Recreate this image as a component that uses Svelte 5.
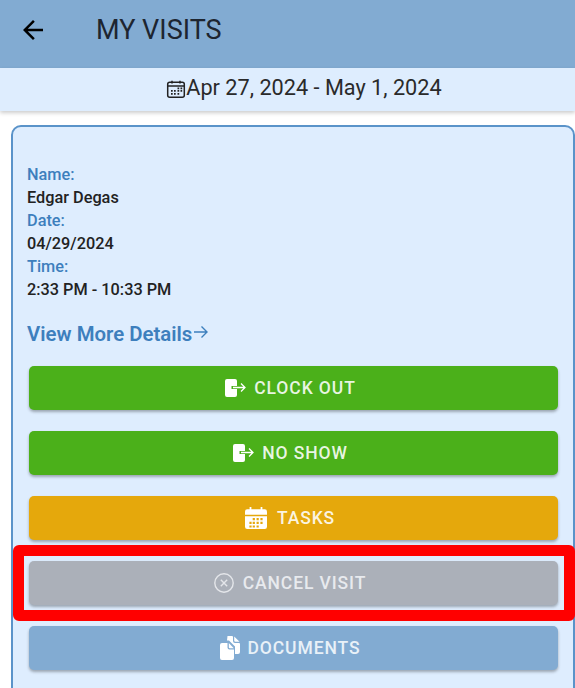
<script>
  const fields = [
    { label: 'Name:', value: 'Edgar Degas' },
    { label: 'Date:', value: '04/29/2024' },
    { label: 'Time:', value: '2:33 PM - 10:33 PM' }
  ];
</script>

<div class="page">
  <header class="topbar">
    <svg class="back" viewBox="0 0 24 24" width="30" height="30"><path d="M20 11H7.830l5.590-5.590L12 4l-8 8 8 8 1.410-1.410L7.830 13H20z" fill="#000"/></svg>
    <h1>MY VISITS</h1>
  </header>

  <div class="range">
    <svg viewBox="0 0 20 20" width="20" height="20" class="cal">
      <rect x="1.700" y="3.200" width="16.600" height="15" rx="2" fill="none" stroke="#222" stroke-width="1.500"/>
      <path d="M2 7h16" stroke="#222" stroke-width="1.500"/>
      <path d="M6 1.800v2.600M14 1.800v2.600" stroke="#222" stroke-width="1.500"/>
      <path d="M11.500 8.500h1.700v1.700h-1.700zM14.500 8.500h1.700v1.700h-1.700zM5 11h1.700v1.700H5zM8 11h1.700v1.700H8zM11.500 11h1.700v1.700h-1.700zM14.500 11h1.700v1.700h-1.700zM5 14h1.700v1.700H5zM8 14h1.700v1.700H8zM11.500 14h1.700v1.700h-1.700z" fill="#222"/>
    </svg><span>Apr 27, 2024 - May 1, 2024</span>
  </div>

  <section class="card">
    <dl>
      {#each fields as f}
        <dt>{f.label}</dt>
        <dd>{f.value}</dd>
      {/each}
    </dl>

    <div class="more">
      <span>View More Details</span>
      <svg viewBox="0 0 18 18" width="18" height="18"><path d="M2 9h13M9.500 3.500 15 9l-5.500 5.500" fill="none" stroke="#3d7fbd" stroke-width="1.400"/></svg>
    </div>

    <div class="actions">
      <button class="green">
        <svg viewBox="0 0 22 18" width="22" height="18"><path d="M3 0h8a2 2 0 0 1 2 2v5H7.500v3H13v6a2 2 0 0 1-2 2H3a2 2 0 0 1-2-2V2a2 2 0 0 1 2-2z" fill="#fff"/><path d="M9 8.500h12M17 4.500l4 4-4 4" fill="none" stroke="#fff" stroke-width="1.300"/></svg>
        CLOCK OUT
      </button>
      <button class="green">
        <svg viewBox="0 0 22 18" width="22" height="18"><path d="M3 0h8a2 2 0 0 1 2 2v5H7.500v3H13v6a2 2 0 0 1-2 2H3a2 2 0 0 1-2-2V2a2 2 0 0 1 2-2z" fill="#fff"/><path d="M9 8.500h12M17 4.500l4 4-4 4" fill="none" stroke="#fff" stroke-width="1.300"/></svg>
        NO SHOW
      </button>
      <button class="amber">
        <svg class="tasks-icon" viewBox="1 1 20 20" width="22" height="22"><path d="M3 3h16a2 2 0 0 1 2 2v3H1V5a2 2 0 0 1 2-2z" fill="#fff"/><path d="M6 1v3M16 1v3" stroke="#fff" stroke-width="1.600"/><path fill-rule="evenodd" d="M1 9.500h20V19a2 2 0 0 1-2 2H3a2 2 0 0 1-2-2zM8 11v2h2v-2zM11.500 11v2h2v-2zM15 11v2h2v-2zM5 14.500v2h2v-2zM8 14.500v2h2v-2zM11.500 14.500v2h2v-2zM15 14.500v2h2v-2zM8 17.800v1.800h2v-1.800zM11.500 17.800v1.800h2v-1.800zM5 17.800v1.800h2v-1.800z" fill="#fff"/></svg>
        TASKS
      </button>
      <button class="grey">
        <svg viewBox="0 0 20 20" width="20" height="20"><circle cx="10" cy="10" r="9.200" fill="none" stroke="#e4e6ea" stroke-width="1.400"/><path d="M6.800 6.800l6.400 6.400M13.200 6.800l-6.400 6.400" stroke="#e4e6ea" stroke-width="1.400"/></svg>
        CANCEL VISIT
      </button>
      <button class="blue">
        <svg viewBox="0 0 20 24" width="20" height="24"><path d="M7.500 0H12l1 .5V5a2 2 0 0 0 2 2h4.500l.5 1v8a2 2 0 0 1-2 2h-3v-7.500L9 4.500H7z" fill="#fff"/><path d="M14.200 .5 19.600 5.800H15.500a1.300 1.300 0 0 1-1.300-1.300z" fill="#fff"/><path d="M2 7h5.500v4.500a2 2 0 0 0 2 2H14V22a2 2 0 0 1-2 2H2a2 2 0 0 1-2-2V9a2 2 0 0 1 2-2z" fill="#fff"/><path d="M8.800 7 13.800 12.200H9.800a1 1 0 0 1-1-1z" fill="#fff"/></svg>
        DOCUMENTS
      </button>
    </div>
  </section>

  <!-- annotation over the screenshot -->
  <div class="highlight"></div>
</div>

<style>
  :global(body) {
    margin: 0;
    background: #fff;
  }

  .page {
    position: relative;
    width: 575px;
    height: 688px;
    overflow: hidden;
    font-family: Roboto, "Liberation Sans", sans-serif;
    background: #fff;
  }

  .topbar {
    height: 68px;
    background: #82abd2;
    display: flex;
    align-items: center;
    padding: 0 0 8px 18px;
    gap: 48px;
    box-sizing: border-box;
  }

  .back {
    width: 30px;
    height: 30px;
  }

  h1 {
    margin: 0;
    font-size: 27px;
    font-weight: 400;
    color: #1d2530;
  }

  .range {
    height: 43px;
    background: #deedfe;
    box-shadow: 0 2px 4px rgba(0, 0, 0, 0.2);
    display: flex;
    align-items: center;
    justify-content: center;
    font-size: 21.700px;
    color: #2a2a2a;
    box-sizing: border-box;
    padding: 0 0 5px 33px;
    position: relative;
  }

  .cal {
    margin-top: 4px;
  }

  .card {
    margin: 14px 0 0 11px;
    width: 564px;
    box-sizing: border-box;
    height: 600px;
    background: #deedfe;
    border: 2px solid #5a93c9;
    border-radius: 10px;
    padding: 36px 15px 0 14px;
  }

  dl {
    margin: 0;
    font-size: 16.300px;
    line-height: 23px;
  }

  dt {
    color: #3d7fbd;
    font-weight: 500;
  }

  dd {
    margin: 0;
    color: #222;
    font-weight: 500;
  }

  .more {
    display: flex;
    align-items: center;
    margin-top: 18px;
    font-size: 20.400px;
    font-weight: 600;
    color: #3d7fbd;
    height: 30px;
  }

  .more svg {
    margin: 0 0 4px 0;
  }

  .actions {
    display: flex;
    flex-direction: column;
    gap: 21px;
    margin: 17px 0 0 2px;
  }

  button {
    height: 44px;
    width: 529px;
    border: none;
    border-radius: 5px;
    display: flex;
    align-items: center;
    justify-content: center;
    gap: 8px;
    color: rgba(255, 255, 255, 0.88);
    font: 500 17.500px Roboto, "Liberation Sans", sans-serif;
    letter-spacing: 0.9px;
    box-shadow: 0 2px 3px rgba(0, 0, 0, 0.3);
    padding: 0 7px 0 0;
  }

  .tasks-icon {
    margin-right: 2px;
  }

  .green {
    background: #4bb01a;
  }

  .amber {
    background: #e5a80c;
  }

  .grey {
    background: #abb0b9;
    color: #e8eaee;
    gap: 9px;
  }

  .blue {
    background: #82abd2;
    color: #e9f1f8;
  }

  .highlight {
    position: absolute;
    left: 13px;
    top: 545px;
    width: 562px;
    height: 76px;
    box-sizing: border-box;
    border: 11px solid #ff0000;
    border-radius: 6px;
  }
</style>
